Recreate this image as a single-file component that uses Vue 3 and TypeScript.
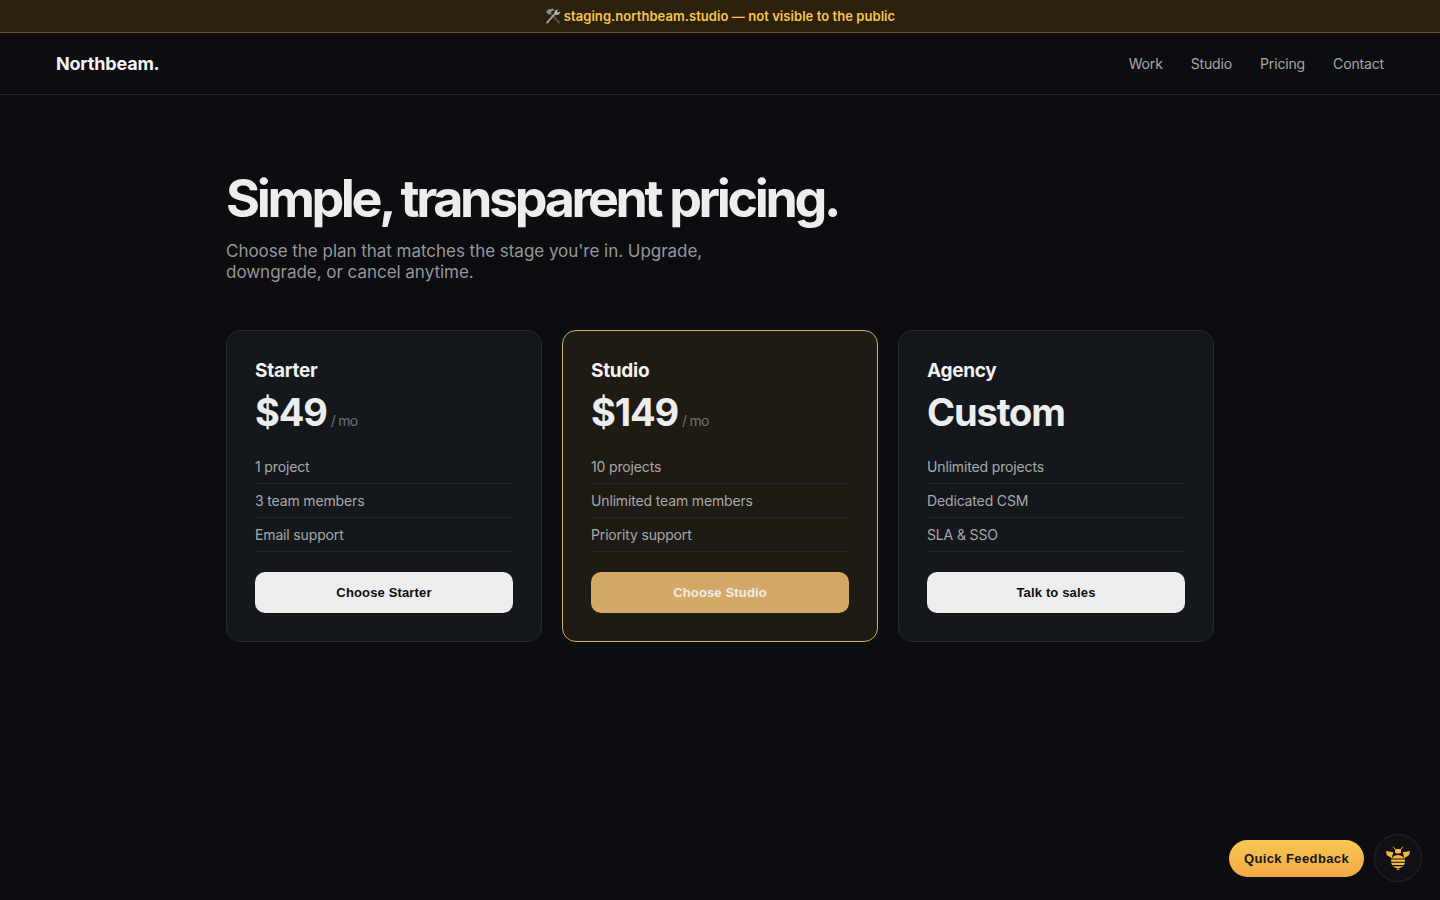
<template>
  <div class="page">
    <div class="staging-banner">
      <svg class="tools-icon" viewBox="0 0 16 16" width="16" height="16">
        <path d="M5.2 4.8 L14 14.6" stroke="#50575d" stroke-width="1.8" stroke-linecap="round" />
        <path d="M1 4.6 L3 1.5 L8 0.5 L9.4 2 L6.6 3.6 L4.2 7 L2.8 5.2 Z" fill="#8a9095" />
        <path d="M2 14.6 L10.8 5" stroke="#a4a9ae" stroke-width="1.8" stroke-linecap="round" />
        <path d="M9.4 5.6 C9 3.4 10.6 1.2 13.4 1.4 L11.8 3.4 L13 4.8 L15.2 3.2 C15.4 5.8 13 7.6 10.6 6.8 Z" fill="#b2b7bb" />
      </svg>
      <span>staging.northbeam.studio — not visible to the public</span>
    </div>

    <header class="site-nav">
      <div class="brand">Northbeam.</div>
      <nav class="nav-links">
        <a v-for="link in navLinks" :key="link">{{ link }}</a>
      </nav>
    </header>

    <main class="pricing">
      <h1>Simple, transparent pricing.</h1>
      <p class="lead">Choose the plan that matches the stage you're in. Upgrade, downgrade, or cancel anytime.</p>

      <div class="plans">
        <section
          v-for="plan in plans"
          :key="plan.name"
          class="plan"
          :class="{ featured: plan.featured }"
        >
          <h3>{{ plan.name }}</h3>
          <div class="price">
            {{ plan.price }}<small v-if="plan.monthly">/ mo</small>
          </div>
          <ul>
            <li v-for="item in plan.features" :key="item">{{ item }}</li>
          </ul>
          <button type="button">{{ plan.cta }}</button>
        </section>
      </div>
    </main>

    <div class="feedback">
      <button type="button" class="feedback-btn">Quick Feedback</button>
      <div class="bee-badge">
        <svg viewBox="0 0 24 24" width="24" height="24">
          <path d="M9.7 3.7 L7.3 1 M14.3 3.7 L16.7 1" stroke="#f4b942" stroke-width="1" stroke-linecap="round" />
          <rect x="9" y="3" width="6" height="4.4" rx="1.6" fill="#f4b942" />
          <path d="M7.3 6.3 L0 5 L0.8 9 L5.7 12.3 Z" fill="#f4b942" />
          <path d="M16.7 6.3 L24 5 L23.2 9 L18.3 12.3 Z" fill="#f4b942" />
          <ellipse cx="12" cy="15.6" rx="7" ry="6.7" fill="#f4b942" />
          <path d="M5.6 13 H18.4 M5 16.3 H19 M6.4 19.6 H17.6" stroke="#14120c" stroke-width="1.1" />
          <rect x="10.4" y="22.3" width="3.2" height="1.6" rx="0.8" fill="#c9832a" />
        </svg>
      </div>
    </div>
  </div>
</template>

<script setup lang="ts">
interface Plan {
  name: string
  price: string
  monthly: boolean
  featured: boolean
  features: string[]
  cta: string
}

const navLinks = ['Work', 'Studio', 'Pricing', 'Contact']

const plans: Plan[] = [
  {
    name: 'Starter',
    price: '$49',
    monthly: true,
    featured: false,
    features: ['1 project', '3 team members', 'Email support'],
    cta: 'Choose Starter'
  },
  {
    name: 'Studio',
    price: '$149',
    monthly: true,
    featured: true,
    features: ['10 projects', 'Unlimited team members', 'Priority support'],
    cta: 'Choose Studio'
  },
  {
    name: 'Agency',
    price: 'Custom',
    monthly: false,
    featured: false,
    features: ['Unlimited projects', 'Dedicated CSM', 'SLA & SSO'],
    cta: 'Talk to sales'
  }
]
</script>

<style>
body {
  background: #0b0d11;
}
</style>

<style scoped>
.page {
  min-height: 900px;
  background: #0b0d11;
  color: #ededed;
  font-family: Inter, "Liberation Sans", sans-serif;
  position: relative;
  overflow: hidden;
}

.staging-banner {
  height: 32px;
  display: flex;
  align-items: center;
  justify-content: center;
  gap: 3px;
  background: #2c220c;
  border-bottom: 1px solid #6d5419;
  color: #f8c550;
  font-size: 13px;
  font-weight: 600;
  letter-spacing: 0.06px;
}

.site-nav {
  height: 61px;
  display: flex;
  align-items: center;
  justify-content: space-between;
  padding: 0 56px;
  border-bottom: 1px solid #1f2226;
}

.brand {
  font-size: 18px;
  font-weight: 700;
  letter-spacing: -0.2px;
  color: #f5f5f5;
}

.nav-links {
  display: flex;
  gap: 28px;
}

.nav-links a {
  font-size: 14px;
  letter-spacing: -0.15px;
  color: #a8a8a8;
}

.pricing {
  width: 988px;
  margin: 0 auto;
  padding-top: 72px;
}

h1 {
  margin: 0;
  font-size: 52px;
  line-height: 64px;
  font-weight: 750;
  letter-spacing: -0.065em;
  color: #ededed;
}

.lead {
  margin: 10px 0 0;
  max-width: 520px;
  font-size: 17px;
  line-height: 21px;
  letter-spacing: -0.03px;
  color: #979797;
}

.plans {
  display: grid;
  grid-template-columns: repeat(3, 1fr);
  gap: 20px;
  margin-top: 47px;
}

.plan {
  height: 312px;
  box-sizing: border-box;
  padding: 28px;
  background: #14181d;
  border: 1px solid #25282d;
  border-radius: 14px;
}

.plan.featured {
  background: #1e1b14;
  border-color: #d4a866;
}

h3 {
  margin: 0;
  font-size: 19px;
  line-height: 24px;
  font-weight: 700;
  letter-spacing: -0.015em;
  color: #f2f2f2;
}

.price {
  margin-top: 6px;
  font-size: 38px;
  line-height: 46px;
  font-weight: 700;
  letter-spacing: -0.03em;
  color: #ededed;
}

.price small {
  margin-left: 4px;
  font-size: 14px;
  line-height: 1;
  font-weight: 400;
  letter-spacing: -0.8px;
  color: #6f6f6f;
}

ul {
  list-style: none;
  margin: 15px 0 20px;
  padding: 0;
}

li {
  height: 34px;
  box-sizing: border-box;
  padding-top: 8px;
  font-size: 14px;
  line-height: 18px;
  letter-spacing: -0.15px;
  color: #a8a8a8;
  border-bottom: 1px solid #23262b;
}

.plan button {
  display: block;
  width: 100%;
  height: 41px;
  border: none;
  border-radius: 10px;
  background: #ededed;
  color: #0b0d11;
  font-family: "Liberation Sans", Arial, sans-serif;
  font-size: 13px;
  font-weight: 700;
  letter-spacing: 0.15px;
}

.plan.featured button {
  background: #d4a866;
  color: #ededed;
}

.feedback {
  position: absolute;
  right: 18px;
  bottom: 18px;
  display: flex;
  align-items: center;
  gap: 10px;
}

.feedback-btn {
  height: 37px;
  width: 135px;
  border: none;
  border-radius: 19px;
  background: linear-gradient(180deg, #f6c751, #f3a847);
  color: #14161a;
  font-family: "Liberation Sans", Arial, sans-serif;
  font-size: 13px;
  font-weight: 700;
  letter-spacing: 0.03em;
}

.bee-badge {
  width: 48px;
  height: 48px;
  box-sizing: border-box;
  display: flex;
  align-items: center;
  justify-content: center;
  border-radius: 50%;
  background: #0f1115;
  border: 1px solid #24262b;
}
</style>
